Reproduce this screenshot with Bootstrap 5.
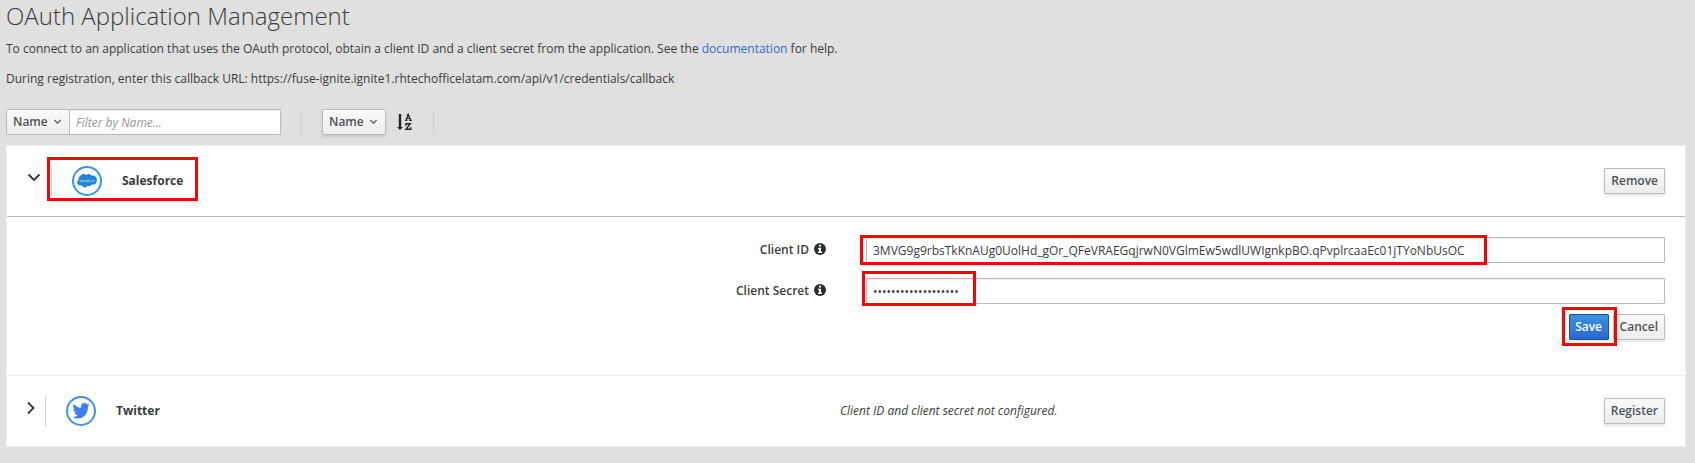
<!DOCTYPE html>
<html lang="en">
<head>
<meta charset="utf-8">
<title>OAuth Application Management</title>
<link href="https://cdn.jsdelivr.net/npm/bootstrap@5.3.0/dist/css/bootstrap.min.css" rel="stylesheet">
<style>
body{background:#e0e0e0;color:#3b3b3b;font-family:"Open Sans",sans-serif;font-size:12px;line-height:20px;height:463px;overflow:hidden}
.page{padding:0 9px 0 6px}
.page-title{font-size:24px;font-weight:300;line-height:26px;margin:3px 0 10px}
.intro{margin:0 0 10px}
.intro a{color:#2b6cd0;text-decoration:none}
.btn{--bs-btn-font-size:12px;--bs-btn-font-weight:600;--bs-btn-line-height:20px;--bs-btn-padding-x:6px;--bs-btn-padding-y:2px;--bs-btn-border-radius:1px;height:26px;box-shadow:0 2px 3px rgba(3,3,3,.1);white-space:nowrap}
.btn-grey{--bs-btn-color:#4d5258;--bs-btn-border-color:#bbb;background:linear-gradient(#fafafa,#ededed)}
.btn-save{--bs-btn-color:#fff;--bs-btn-border-color:#1f50a0;--bs-btn-padding-x:0;width:40px;background:linear-gradient(#3b93df,#2a68d0)}
.form-control{font-size:12px;line-height:20px;padding:2px 6px;height:26px;min-height:26px;border-color:#bbb;border-radius:1px;color:#3b3b3b;box-shadow:inset 0 1px 1px rgba(3,3,3,.075)}
.form-control::placeholder{font-style:italic;color:#999;opacity:1}
.toolbar{height:26px;margin-top:20px}
.filter{width:275px;height:26px}
.filter .btn{box-shadow:none}
.name-btn{width:64px}
.caret{margin-left:auto;margin-right:1px}
.rule{width:1px;background:#d1d1d1}
.list{margin-top:10px;height:302px;background:#fff;border:1px solid #ededed}
.head-row{height:71px;border-bottom:1px solid #bbb;padding:0 20px}
.last-row{border-top:1px solid #ededed;padding:0 20px;height:71px}
.panel-body{height:158px;padding:20px 20px 0}
.field-label{flex:none;width:782px;text-align:right;font-weight:600;height:26px;line-height:25px}
.pair{height:26px}
.bar{height:30px;width:1px;background:#d1d1d1}
.frame{position:absolute;border:3px solid #f00;pointer-events:none;z-index:9}
svg{display:block;flex:none}
</style>
</head>
<body>
<main class="page">
<h1 class="page-title">OAuth Application Management</h1>
<p class="intro">To connect to an application that uses the OAuth protocol, obtain a client ID and a client secret from the application. See the <a href="#">documentation</a> for help.</p>
<p class="intro">During registration, enter this callback URL: https://fuse-ignite.ignite1.rhtechofficelatam.com/api/v1/credentials/callback</p>

<div class="toolbar d-flex">
  <div class="input-group flex-nowrap filter">
    <button class="btn btn-grey name-btn d-flex align-items-center">Name<svg class="caret" width="9" height="6" viewBox="0 0 9 6" fill="none" stroke="#4d5258" stroke-width="1.1"><path d="M1.300 1l3.200 3.200L7.700 1"/></svg></button>
    <input class="form-control" placeholder="Filter by Name..." aria-label="Filter">
  </div>
  <div class="rule" style="margin-left:20px"></div>
  <button class="btn btn-grey name-btn d-flex align-items-center" style="margin-left:20px">Name<svg class="caret" width="9" height="6" viewBox="0 0 9 6" fill="none" stroke="#4d5258" stroke-width="1.1"><path d="M1.300 1l3.200 3.200L7.700 1"/></svg></button>
  <svg width="16" height="18" viewBox="0 0 16 18" style="margin:4px 0 0 11px" fill="none" stroke="#252525"><path d="M3 1v14" stroke-width="2.400"/><path d="M0 14h6L3 17z" fill="#252525" stroke="none"/><path d="M8.900 7.300L11.300 1.500l2.400 5.800M9.600 5.500h3.400M8 7.400h2.400M12.200 7.400h2.600M9.900 1.600h1.600" stroke-width="1.200"/><path d="M8.900 12.700v-2h4.400L8.900 16.300h4.900v-2" stroke-width="1.400"/></svg>
  <div class="rule" style="margin-left:20px"></div>
</div>

<section class="list">
  <div class="head-row d-flex align-items-center position-relative">
    <svg width="14" height="10" viewBox="0 0 14 10" style="margin-top:-7px" fill="none" stroke="#363636" stroke-width="1.800"><path d="M1.500 1.500L7 7l5.500-5.500"/></svg>
    <div class="bar" style="margin-left:10px"></div>
    <svg width="30" height="30" viewBox="0 0 30 30" style="margin-left:20px"><circle cx="15" cy="15" r="14" fill="#fff" stroke="#3e94e0" stroke-width="2"/><path d="M8.200 10.200C9 7.500 12.500 7.300 14.300 9c1.700-1.700 4-1 5 .6 2.800-.8 5.700 1.200 5.700 4.300 0 3.500-2.500 5.100-5.200 4.600-.9 1.700-2.800 2-4.200 1.300-1.300 2.300-4.700 2.400-5.700-.5C7 20 5.200 18.500 5.200 16.500c0-1.200.6-2.100 1.500-2.700-.8-1.500 0-3 1.500-3.600z" fill="#2186d9"/><text x="7.500" y="15.500" font-size="4" font-style="italic" fill="#d8ecfb" textLength="15" lengthAdjust="spacingAndGlyphs">salesforce</text></svg>
    <strong style="margin-left:20px">Salesforce</strong>
    <button class="btn btn-grey ms-auto">Remove</button>
    <span class="frame" style="left:40px;top:11px;width:151px;height:44px"></span>
  </div>
  <div class="panel-body position-relative">
    <div class="d-flex pair">
      <label class="field-label">Client ID</label>
      <svg width="12" height="12" viewBox="0 0 12 12" style="margin:6px 40px 0 5px"><circle cx="6" cy="6" r="6" fill="#292e34"/><path d="M5 1.800h2v1.700H5zM4 4.800h3v3.700h1V10H4V8.500h1V6.200H4z" fill="#fff"/></svg>
      <input class="form-control" value="3MVG9g9rbsTkKnAUg0UolHd_gOr_QFeVRAEGqjrwN0VGlmEw5wdlUWIgnkpBO.qPvplrcaaEc01jTYoNbUsOC" aria-label="Client ID">
    </div>
    <div class="d-flex pair" style="margin-top:15px">
      <label class="field-label">Client Secret</label>
      <svg width="12" height="12" viewBox="0 0 12 12" style="margin:6px 40px 0 5px"><circle cx="6" cy="6" r="6" fill="#292e34"/><path d="M5 1.800h2v1.700H5zM4 4.800h3v3.700h1V10H4V8.500h1V6.200H4z" fill="#fff"/></svg>
      <input class="form-control" type="password" value="abcdefghijklmnopqrs" aria-label="Client Secret">
    </div>
    <div class="d-flex justify-content-end" style="margin-top:10px;gap:4px">
      <button class="btn btn-save">Save</button>
      <button class="btn btn-grey">Cancel</button>
    </div>
    <span class="frame" style="left:853px;top:18px;width:627px;height:30px"></span>
    <span class="frame" style="left:855px;top:54px;width:114px;height:35px"></span>
    <span class="frame" style="left:1555px;top:90px;width:55px;height:39px"></span>
  </div>
  <div class="last-row d-flex align-items-center position-relative">
    <svg width="8" height="14" viewBox="0 0 8 14" style="margin-top:-7px" fill="none" stroke="#363636" stroke-width="1.800"><path d="M1 1.500L6.500 7 1 12.500"/></svg>
    <div class="bar" style="margin-left:10px"></div>
    <svg width="30" height="30" viewBox="0 0 30 30" style="margin-left:20px"><circle cx="15" cy="15" r="14" fill="#fff" stroke="#3e94e0" stroke-width="2"/><path transform="translate(5.700 4.800) scale(.76 .84)" d="M23.640 4.937c-.835.370-1.732.620-2.675.733.962-.576 1.700-1.490 2.048-2.578-.900.534-1.897.922-2.958 1.130-.850-.904-2.060-1.470-3.400-1.470-2.572 0-4.658 2.086-4.658 4.660 0 .364.042.718.120 1.060-3.873-.195-7.304-2.050-9.602-4.868-.400.690-.630 1.490-.630 2.342 0 1.616.823 3.043 2.072 3.878-.764-.025-1.482-.234-2.110-.583v.060c0 2.257 1.605 4.140 3.737 4.568-.392.106-.803.162-1.227.162-.300 0-.593-.028-.877-.082.593 1.850 2.313 3.198 4.352 3.234-1.595 1.250-3.604 1.995-5.786 1.995-.376 0-.747-.022-1.112-.065 2.062 1.323 4.510 2.093 7.140 2.093 8.570 0 13.255-7.098 13.255-13.254 0-.200-.005-.402-.014-.602.910-.658 1.700-1.477 2.323-2.410z" fill="#4080f5"/></svg>
    <strong style="margin-left:20px">Twitter</strong>
    <em style="position:absolute;left:833px">Client ID and client secret not configured.</em>
    <button class="btn btn-grey ms-auto">Register</button>
  </div>
</section>
</main>
<script src="https://cdn.jsdelivr.net/npm/bootstrap@5.3.0/dist/js/bootstrap.bundle.min.js"></script>
</body>
</html>
